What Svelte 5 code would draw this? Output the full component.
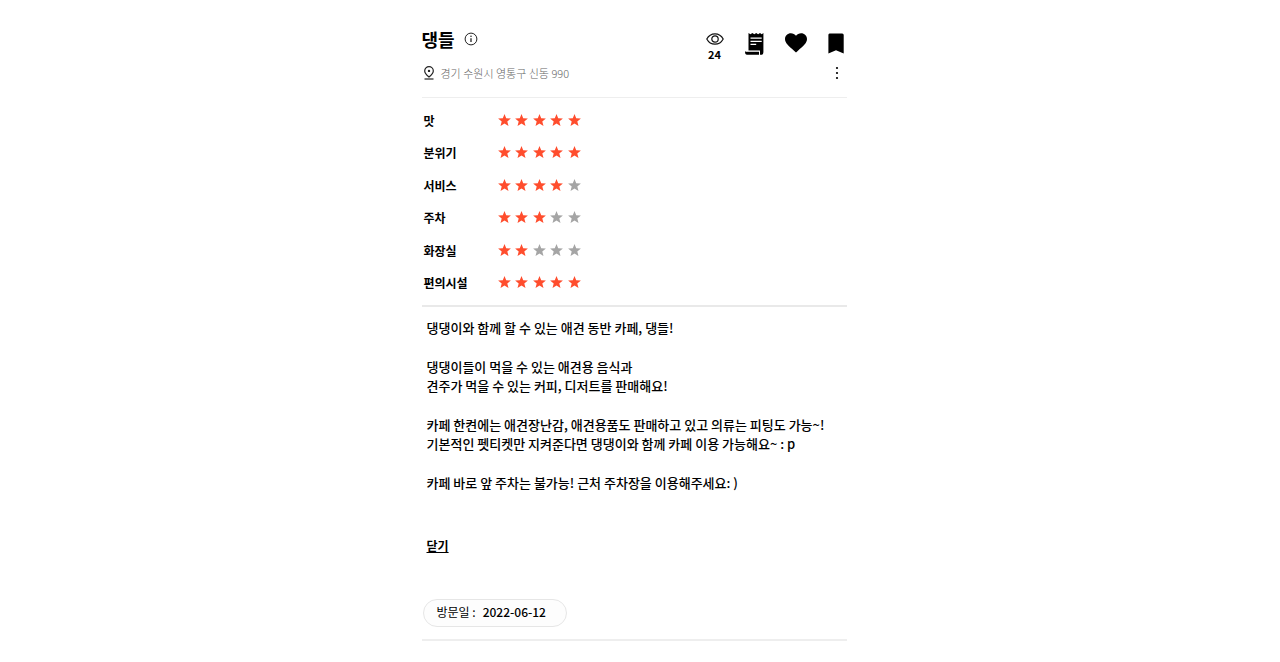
<script>
  const ratings = [
    { name: '맛', score: 5 },
    { name: '분위기', score: 5 },
    { name: '서비스', score: 4 },
    { name: '주차', score: 3 },
    { name: '화장실', score: 2 },
    { name: '편의시설', score: 5 }
  ];
  const stars = [1, 2, 3, 4, 5];
  const review = [
    ['댕댕이와 함께 할 수 있는 애견 동반 카페, 댕들!'],
    ['댕댕이들이 먹을 수 있는 애견용 음식과', '견주가 먹을 수 있는 커피, 디저트를 판매해요!'],
    [
      '카페 한켠에는 애견장난감, 애견용품도 판매하고 있고 의류는 피팅도 가능~!',
      '기본적인 펫티켓만 지켜준다면 댕댕이와 함께 카페 이용 가능해요~ : p'
    ],
    ['카페 바로 앞 주차는 불가능! 근처 주차장을 이용해주세요: )']
  ];
</script>

<main class="page">
  <article class="place">
    <header class="head">
      <div class="top">
        <div class="title">
          <h1>댕들</h1>
          <button class="icon" aria-label="정보">
            <svg width="14" height="14" viewBox="0 0 14 14" fill="none" stroke="#222">
              <circle cx="7" cy="7" r="5.9" />
              <path d="M7 6.2v3.9" stroke-width="1.3" />
              <circle cx="7" cy="4.3" r=".8" fill="#222" stroke="none" />
            </svg>
          </button>
        </div>
        <div class="actions">
          <div class="views">
            <svg width="18" height="12" viewBox="0 0 18 12" fill="none" stroke="#111" stroke-width="1.2">
              <path d="M.8 6C2.6 2.6 5.5.8 9 .8S15.4 2.6 17.2 6C15.4 9.4 12.5 11.2 9 11.2S2.6 9.4.8 6Z" />
              <circle cx="9" cy="6" r="3.2" />
            </svg>
            <span>24</span>
          </div>
          <button class="icon" aria-label="영수증">
            <svg width="19" height="22" viewBox="0 0 19 22">
              <path d="M3.500 0l1.900 1.300L7.400 0l1.900 1.300L11.200 0l1.900 1.300L15 0l1.700 1.300L18.400 0v19.200a2.600 2.600 0 0 1-2.600 2.600H15v-4H3.500Z" />
              <path d="M0 18.600h14v3.200H2q-2 0-2-3.200Z" />
              <path d="M5.500 5.200h11.200M5.500 8.300h11.200M5.500 11.300h5.700" stroke="#fff" stroke-width="1.300" />
              <path d="M1 18.100h13.800" stroke="#fff" stroke-width="1" />
            </svg>
          </button>
          <button class="icon" aria-label="좋아요">
            <svg width="22" height="20" viewBox="0 0 22 20">
              <path d="M11 19.500 9.300 18C3.500 12.900 0 10 0 6.100 0 2.800 2.600.3 5.900.3c2 0 3.900.9 5.100 2.400C12.200 1.200 14.100.3 16.100.3 19.400.3 22 2.800 22 6.100c0 3.900-3.500 6.800-9.300 11.900Z" />
            </svg>
          </button>
          <button class="icon" aria-label="저장">
            <svg width="16" height="21" viewBox="0 0 16 21">
              <path d="M1.500.5h12.700a1.500 1.500 0 0 1 1.500 1.500v18.500L8 17.200.4 20.500V2A1.500 1.500 0 0 1 1.500.5Z" />
            </svg>
          </button>
        </div>
      </div>
      <div class="address">
        <svg width="12" height="14" viewBox="0 0 12 14" fill="none" stroke="#222" stroke-width="1.200">
          <path d="M6 11C3.300 8.700 1.700 6.800 1.700 4.900a4.300 4.300 0 0 1 8.600 0C10.300 6.800 8.700 8.700 6 11Z" />
          <circle cx="6" cy="4.900" r="1.200" fill="#222" stroke="none" />
          <path d="M1.500 13h9" />
        </svg>
        <span>경기 수원시 영통구 신동 990</span>
        <button class="icon more" aria-label="더보기">
          <svg width="4" height="14" viewBox="0 0 4 14">
            <circle cx="2" cy="2" r="1.100" /><circle cx="2" cy="7" r="1.100" /><circle cx="2" cy="12" r="1.100" />
          </svg>
        </button>
      </div>
    </header>

    <dl class="ratings">
      {#each ratings as item}
        <div class="rating">
          <dt>{item.name}</dt>
          <dd aria-label="5점 만점에 {item.score}점">
            {#each stars as n}
              <svg class="star" class:on={n <= item.score} width="13" height="12" viewBox="0 0 13 12">
                <path d="M6.500 0 8.200 4.200 12.900 4.500 9.300 7.400 10.500 12 6.500 9.500 2.500 12 3.700 7.400.1 4.500 4.800 4.200Z" />
              </svg>
            {/each}
          </dd>
        </div>
      {/each}
    </dl>

    <section class="review">
      {#each review as lines}
        <p>{#each lines as line, i}{#if i > 0}<br />{/if}{line}{/each}</p>
      {/each}
      <button class="close">닫기</button>
    </section>

    <footer class="foot">
      <div class="visit"><span>방문일 :</span><time datetime="2022-06-12">2022-06-12</time></div>
    </footer>
  </article>
</main>

<style>
  :global(body) {
    background: #fff;
  }
  .page {
    box-sizing: border-box;
    margin: 21px 10px;
    padding: 0 12px 0 0;
    font-family: 'Noto Sans CJK KR', 'Noto Sans', sans-serif;
    color: #000;
  }
  .place {
    max-width: 425px;
    margin: 0 auto;
  }
  button {
    padding: 0;
    border: 0;
    background: none;
    font: inherit;
    color: inherit;
    cursor: pointer;
  }
  svg {
    display: block;
    flex: none;
  }
  .head {
    padding: 6px 0 16px;
    border-bottom: 1px solid #eee;
  }
  .top {
    display: flex;
    justify-content: space-between;
    align-items: flex-start;
  }
  .title {
    display: flex;
    align-items: center;
    gap: 9px;
  }
  h1 {
    margin: 0;
    font-size: 18px;
    line-height: 24px;
    font-weight: 700;
  }
  .actions {
    display: flex;
    align-items: flex-start;
    gap: 21px;
    padding: 6px 3px 0 0;
  }
  .views {
    display: flex;
    flex-direction: column;
    align-items: center;
    font-size: 11px;
    line-height: 14px;
    font-weight: 700;
    gap: 2px;
  }
  .address {
    display: flex;
    align-items: center;
    gap: 6px;
    margin-top: 4px;
    padding: 0 8px 0 1px;
    font-size: 11px;
    line-height: 16px;
    font-weight: 300;
    color: #666;
  }
  .more {
    margin-left: auto;
  }
  .ratings {
    display: flex;
    flex-direction: column;
    justify-content: space-between;
    min-height: 194px;
    margin: 0;
    padding: 7px 0 6px;
    border-bottom: 2px solid #e9e9e9;
  }
  .rating {
    display: flex;
    align-items: center;
    height: 32px;
    padding-left: 2px;
  }
  dt {
    width: 74px;
    font-size: 12px;
    line-height: 18px;
    font-weight: 700;
  }
  dd {
    display: flex;
    justify-content: space-between;
    width: 83px;
    margin: 0;
    padding-bottom: 2px;
  }
  .star {
    fill: #a5a5a5;
  }
  .star.on {
    fill: #ff4d2d;
  }
  .review {
    display: flex;
    flex-direction: column;
    align-items: flex-start;
    gap: 20px;
    padding: 11px 0 0 5px;
    font-size: 13px;
    line-height: 19px;
    font-weight: 500;
  }
  p {
    margin: 0;
  }
  .close {
    margin-top: 24px;
    font-size: 12px;
    font-weight: 700;
    text-decoration: underline;
  }
  .foot {
    padding: 43px 0 12px 1px;
    border-bottom: 2px solid #eee;
  }
  .visit {
    display: inline-flex;
    gap: 7px;
    padding: 3px 20px 5px 13px;
    border: 1px solid #e6e6e6;
    border-radius: 14px;
    background: #fdfdfd;
    font-size: 12px;
    line-height: 18px;
    font-weight: 400;
  }
  time {
    font-weight: 500;
  }
</style>
